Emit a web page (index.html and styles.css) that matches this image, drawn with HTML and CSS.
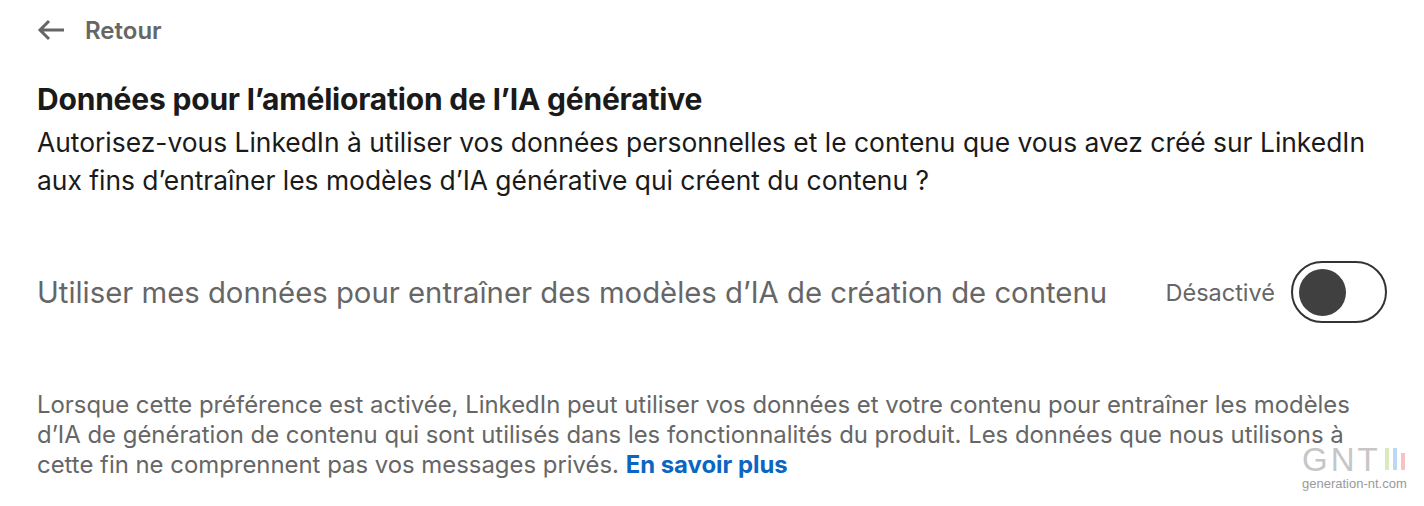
FILE: index.html
```html
<!DOCTYPE html>
<html lang="fr">
<head>
    <meta charset="UTF-8">
    <meta name="viewport" content="width=device-width, initial-scale=1.0">
    <title>Données pour l’amélioration de l’IA générative</title>
    <link rel="stylesheet" href="styles.css">
</head>
<body>
    <div class="page">
        <a class="back" href="#">
            <svg class="back-icon" width="28" height="22" viewBox="0 0 28 22" aria-hidden="true">
                <path d="M27 11H4M12 2L3 11l9 9" fill="none" stroke="#666" stroke-width="3"/>
            </svg>
            <span>Retour</span>
        </a>

        <h1 class="title">Données pour l’amélioration de l’IA générative</h1>
        <p class="question">Autorisez-vous LinkedIn à utiliser vos données personnelles et le contenu que vous avez créé sur LinkedIn aux fins d’entraîner les modèles d’IA générative qui créent du contenu ?</p>

        <div class="setting">
            <span class="setting-label">Utiliser mes données pour entraîner des modèles d’IA de création de contenu</span>
            <div class="setting-control">
                <span class="state">Désactivé</span>
                <button class="toggle" type="button" aria-pressed="false"><span class="knob"></span></button>
            </div>
        </div>

        <p class="note">Lorsque cette préférence est activée, LinkedIn peut utiliser vos données et votre contenu pour entraîner les modèles d’IA de génération de contenu qui sont utilisés dans les fonctionnalités du produit. Les données que nous utilisons à cette fin ne comprennent pas vos messages privés. <a href="#">En savoir plus</a></p>
    </div>

    <div class="watermark">
        <div class="wm-logo">GNT<span class="bars"><i class="b1"></i><i class="b2"></i><i class="b3"></i></span></div>
        <div class="wm-url">generation-nt.com</div>
    </div>
</body>
</html>
```

FILE: styles.css
```css
body {
    margin: 0;
    font-family: Inter, "Noto Sans", sans-serif;
    background-color: #fff;
    color: #1a1a1a;
}
.page {
    padding: 14px 40px 0 37px;
}
.back {
    display: flex;
    align-items: center;
    gap: 20px;
    color: #666;
    text-decoration: none;
    font-weight: 600;
    font-size: 24px;
    height: 32px;
}
.title {
    margin: 35px 0 0;
    font-size: 30px;
    font-weight: 700;
    letter-spacing: -0.2px;
    line-height: 36px;
}
.question {
    margin: 6px 0 0;
    font-size: 26.4px;
    line-height: 38px;
}
.setting {
    display: flex;
    align-items: center;
    justify-content: space-between;
    margin-top: 62px;
}
.setting-label {
    font-size: 29.3px;
    color: #666;
}
.setting-control {
    display: flex;
    align-items: center;
    gap: 16px;
    margin-right: -3px;
}
.state {
    font-size: 23.5px;
    color: #666;
}
.toggle {
    width: 96px;
    height: 62px;
    border: 2px solid #333;
    border-radius: 31px;
    background: #fff;
    padding: 0 0 0 6px;
    display: flex;
    align-items: center;
}
.knob {
    width: 47px;
    height: 47px;
    border-radius: 50%;
    background: #404040;
}
.note {
    margin: 67px 0 0;
    font-size: 23.9px;
    line-height: 30px;
    color: #666;
    max-width: 1335px;
}
.note a {
    color: #0a66c2;
    font-weight: 700;
    text-decoration: none;
}
.watermark {
    position: absolute;
    left: 1302px;
    top: 446px;
    text-align: left;
}
.wm-logo {
    display: flex;
    align-items: flex-end;
    font-family: "Liberation Sans", sans-serif;
    font-size: 33px;
    line-height: 27px;
    letter-spacing: 3px;
    color: #c6c6c6;
}
.bars {
    display: inline-flex;
    gap: 4px;
    margin-left: 4px;
    margin-bottom: 3px;
    align-items: flex-end;
}
.bars i {
    width: 4px;
    height: 22px;
}
.b1 { background: #d9ebbc; }
.b2 { background: #bdd8f2; }
.b3 { background: #f6c3c3; height: 17px !important; }
.wm-url {
    font-family: "Liberation Sans", sans-serif;
    font-size: 13px;
    color: #9a9a9a;
    margin-top: 3px;
}
```
